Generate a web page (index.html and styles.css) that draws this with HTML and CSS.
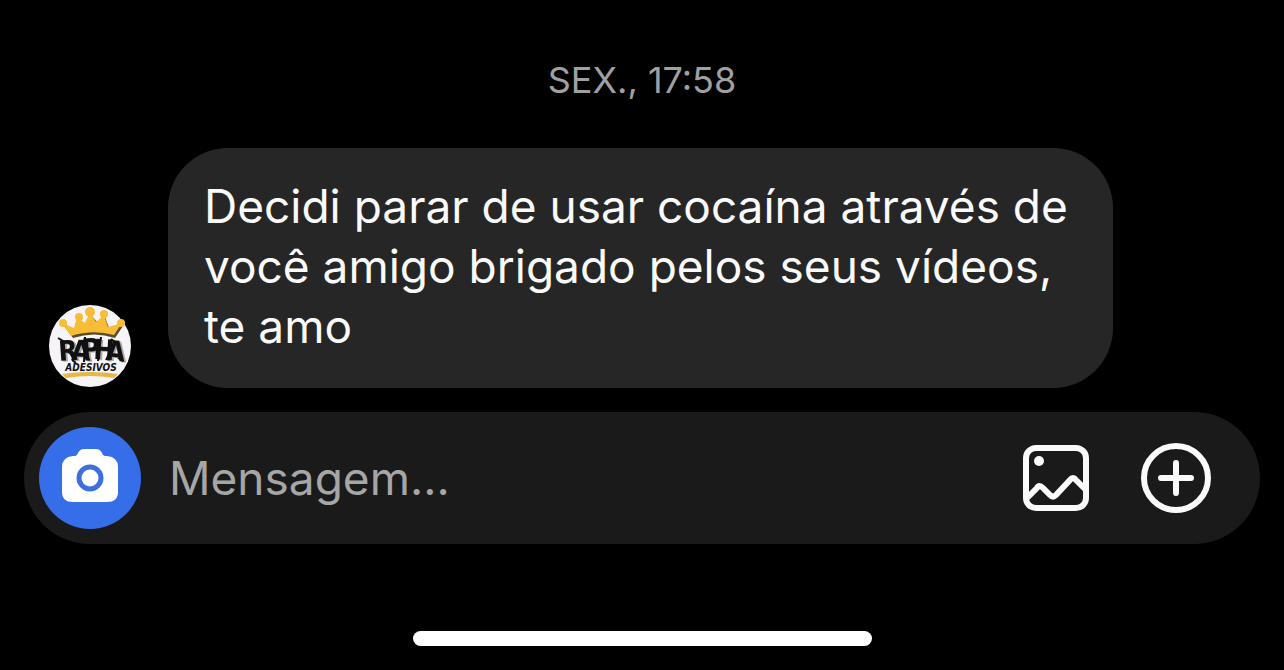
FILE: index.html
```html
<!DOCTYPE html>
<html lang="pt-BR">
<head>
<meta charset="utf-8">
<meta name="viewport" content="width=device-width, initial-scale=1">
<title>Mensagens</title>
<link rel="stylesheet" href="styles.css">
</head>
<body>
<main class="chat">
  <time class="timestamp">SEX., 17:58</time>
  <div class="message">
    <svg class="avatar" viewBox="0 0 84 84" role="img" aria-label="Rapha Adesivos">
      <circle cx="42" cy="42" r="41" fill="#f6f4f6"/>
      <path d="M24 32 L15 20 L27 25 L30 14 L37 18 L42 9 L49 17 L56 11 L60 22 L74 20 L66 32 Q45 25 24 32Z" fill="#5c4a2c" transform="translate(1 2)"/>
      <g fill="#f7bd35">
        <path d="M23 32 L14 19 L26 24 L29 13 L37 19 L42 8 L48 18 L56 11 L60 23 L74 19 L66 31 Q45 25 23 32Z"/>
        <circle cx="15" cy="19" r="4"/><circle cx="31" cy="13" r="4"/><circle cx="42" cy="8" r="5"/><circle cx="56" cy="10" r="4"/><circle cx="73" cy="19" r="4"/>
      </g>
      <path d="M14 70 Q42 66 70 70 L66 74 Q42 70 18 74Z" fill="#e6b647"/>
      <text x="11 23 34 45 57" y="57 56 55 55 56" rotate="-4 2 -3 3 5" class="logo-name">RAPHA</text>
      <path d="M10 34 L17 38 M37 33 L36 58 M24 56 L28 59 M53 33 L50 57 M63 35 L67 38 M70 54 L75 57" fill="none" stroke="#111" stroke-width="2"/>
      <text x="43" y="67" class="logo-sub">ADESIVOS</text>
    </svg>
    <p class="bubble">Decidi parar de usar cocaína através de você amigo brigado pelos seus vídeos, te amo</p>
  </div>
  <form class="composer">
    <button class="camera" type="button" aria-label="Câmera">
      <svg viewBox="0 0 56 58">
        <path d="M11 7 H13 Q15 7 16 4 Q18 0 22 0 H34 Q38 0 40 4 Q41 7 43 7 H45 Q56 8 56 18 V43 Q56 53 45 53 H11 Q0 53 0 43 V18 Q0 8 11 7Z" fill="#fff"/>
        <circle cx="28" cy="29" r="11" fill="#fff" stroke="#3d6fdd" stroke-width="5"/>
      </svg>
    </button>
    <input class="field" type="text" placeholder="Mensagem..." aria-label="Mensagem">
    <button class="action" type="button" aria-label="Galeria">
      <svg viewBox="0 0 72 72">
        <rect x="6" y="6" width="60" height="60" rx="10"/>
        <path d="M7 56 L17 46 Q19 42 23 46 L30 53 Q33 56 36 53 L50 38 Q53 34 56 38 L65 47"/>
        <circle class="dot" cx="19" cy="19" r="5"/>
      </svg>
    </button>
    <button class="action" type="button" aria-label="Mais opções">
      <svg viewBox="0 0 72 72">
        <circle cx="36" cy="36" r="32"/>
        <path d="M36 21 V51 M21 36 H51"/>
      </svg>
    </button>
  </form>
  <div class="home-indicator"></div>
</main>
</body>
</html>
```
FILE: styles.css
```css
* { box-sizing: border-box; }

body {
  margin: 0;
  background: #000;
  color: #fafafa;
  font-family: Inter, "Liberation Sans", sans-serif;
}

.chat {
  display: flex;
  flex-direction: column;
  min-height: 100vh;
  padding: 56px 24px 24px;
}

.timestamp {
  align-self: center;
  margin-bottom: 44px;
  color: #a0a0a0;
  font-size: 36px;
  line-height: 48px;
}

.message {
  display: flex;
  align-items: flex-end;
  gap: 36px;
  margin: 0 24px 24px;
}

.avatar {
  flex: none;
  width: 84px;
  height: 84px;
}

.logo-name {
  font-family: "Liberation Sans Narrow", "DejaVu Sans Condensed", sans-serif;
  font-size: 28px;
  font-weight: bold;
  fill: #111;
  filter: drop-shadow(2px 1px 0 #aaa);
}

.logo-sub {
  font-family: "DejaVu Sans Condensed", "DejaVu Sans", sans-serif;
  font-size: 10px;
  font-style: italic;
  font-weight: bold;
  text-anchor: middle;
  fill: #111;
}

.bubble {
  max-width: 945px;
  margin: 0;
  padding: 28px 36px 32px;
  border-radius: 60px;
  background: #262626;
  font-size: 46px;
  line-height: 60px;
}

.composer {
  display: flex;
  align-items: center;
  gap: 48px;
  padding: 15px 48px 15px 15px;
  border-radius: 66px;
  background: #1a1a1a;
}

.composer button {
  display: flex;
  flex: none;
  align-items: center;
  justify-content: center;
  padding: 0;
  border: 0;
  background: none;
}

.composer .camera {
  width: 102px;
  height: 102px;
  margin-right: -20px;
  border-radius: 50%;
  background: #366eea;
}

.camera svg {
  width: 56px;
  height: 58px;
}

.field {
  flex: 1;
  min-width: 0;
  padding: 0;
  border: 0;
  outline: 0;
  background: none;
  color: #fafafa;
  font: inherit;
  font-size: 46px;
  line-height: 60px;
}

.field::placeholder {
  color: #a6a6a6;
  opacity: 1;
}

.action svg {
  width: 72px;
  height: 72px;
  fill: none;
  stroke: #fafafa;
  stroke-width: 6;
  stroke-linecap: round;
  stroke-linejoin: round;
}

.action .dot {
  fill: #fafafa;
  stroke: none;
}

.home-indicator {
  align-self: center;
  width: 459px;
  max-width: 100%;
  height: 15px;
  margin-top: auto;
  border-radius: 8px;
  background: #fff;
}
```
